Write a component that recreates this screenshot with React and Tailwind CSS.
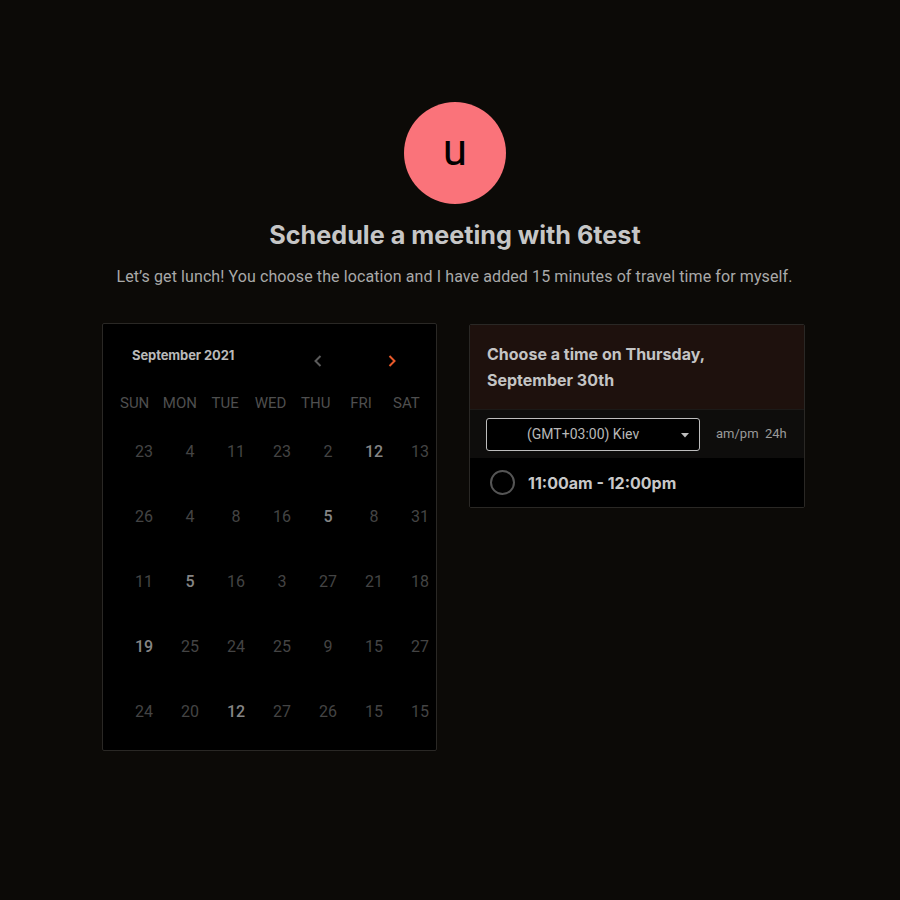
import React from "react";

const weekdays = ["SUN", "MON", "TUE", "WED", "THU", "FRI", "SAT"];
const rows = [
  [["23"], ["4"], ["11"], ["23"], ["2"], ["12", 1], ["13"]],
  [["26"], ["4"], ["8"], ["16"], ["5", 1], ["8"], ["31"]],
  [["11"], ["5", 1], ["16"], ["3"], ["27"], ["21"], ["18"]],
  [["19", 1], ["25"], ["24"], ["25"], ["9"], ["15"], ["27"]],
  [["24"], ["20"], ["12", 1], ["27"], ["26"], ["15"], ["15"]],
];

function Calendar() {
  return (
    <div className="w-[335px] h-[428px] bg-black border border-[#2a2825] rounded-[2px] shrink-0 relative">
      <div className="flex items-center h-[20px] mt-[22px] pl-[29px]">
        <span className="text-[13px] font-bold text-[#b9b9b9] font-['Inter',sans-serif] tracking-[-0.1px]">
          September 2021
        </span>
        <div className="ml-[78px] text-[#5b5b5b] mt-[10px]">
          <svg width="12" height="14" viewBox="0 0 12 14" fill="none">
            <path d="M8.5 2 L3.5 7 L8.5 12" stroke="currentColor" strokeWidth="2" />
          </svg>
        </div>
        <div className="ml-[62px] text-[#e8592a] mt-[10px]">
          <svg width="12" height="14" viewBox="0 0 12 14" fill="none">
            <path d="M3.5 2 L8.5 7 L3.5 12" stroke="currentColor" strokeWidth="2" />
          </svg>
        </div>
      </div>
      <div className="grid grid-cols-7 w-[317px] ml-[9px] mt-[27px]">
        {weekdays.map((d) => (
          <div
            key={d}
            className="text-center text-[15px] text-[#4f4f4f] font-['Roboto',sans-serif] leading-[20px]"
          >
            {d}
          </div>
        ))}
      </div>
      <div className="ml-[18px] w-[322px] mt-[24px]">
        {rows.map((r, i) => (
          <div key={i} className="grid grid-cols-7 h-[65px]">
            {r.map(([n, b], j) => (
              <div
                key={j}
                className={`flex items-start justify-center pt-[2px] text-[16px] leading-[26px] font-['Roboto',sans-serif] ${
                  b ? "text-[#858585] font-medium" : "text-[#444444]"
                }`}
              >
                {n}
              </div>
            ))}
          </div>
        ))}
      </div>
    </div>
  );
}

function TimePanel() {
  return (
    <div className="w-[336px] border border-[#2a2825] rounded-[2px] overflow-hidden shrink-0 mt-[1px] bg-black">
      <div className="bg-[#1e110d] h-[84px] pl-[17px] pt-[16px]">
        <div className="text-[16px] font-bold leading-[26px] text-[#c4c4c4] font-['Inter',sans-serif]">
          Choose a time on Thursday,
          <br />
          September 30th
        </div>
      </div>
      <div className="bg-[#0e0d0c] h-[49px] flex items-center pl-[16px] border-t border-[#1c1a18]">
        <div className="w-[214px] h-[33px] border border-[#bdbdbd] rounded-[3px] bg-black flex items-center relative">
          <span className="ml-[40px] text-[14px] text-[#b8b8b8] font-['Roboto',sans-serif]">
            (GMT+03:00) Kiev
          </span>
          <svg className="absolute right-[10px] top-[14px]" width="8" height="5" viewBox="0 0 8 5">
            <path d="M0 0 L8 0 L4 4.5 Z" fill="#bdbdbd" />
          </svg>
        </div>
        <span className="ml-[16px] text-[13px] text-[#9a9a9a] font-['Roboto',sans-serif]">
          am/pm&nbsp;&nbsp;24h
        </span>
      </div>
      <div className="bg-black h-[49px] flex items-center pl-[20px]">
        <div className="w-[25px] h-[25px] rounded-full border-2 border-[#555]" />
        <span className="ml-[13px] text-[16px] font-bold text-[#c8c8c8] font-['Inter',sans-serif]">
          11:00am - 12:00pm
        </span>
      </div>
    </div>
  );
}

export default function App() {
  return (
    <div className="min-h-[900px] w-full bg-[#0c0a07] flex flex-col items-center pt-[102px]">
      <div className="w-[102px] h-[102px] rounded-full bg-[#fa737a] flex items-center justify-center ml-[10px]">
        <span className="text-[44px] leading-none text-black font-['Roboto',sans-serif] -mt-[6px]">
          u
        </span>
      </div>
      <h1 className="mt-[14px] text-[25.2px] font-bold text-[#c6c6c6] font-['Inter',sans-serif] leading-[34px] ml-[10px]">
        Schedule a meeting with 6test
      </h1>
      <p className="mt-[13px] text-[16px] text-[#a9a9a9] font-['Roboto',sans-serif] leading-[24px] ml-[9px] tracking-[0.1px]">
        Let’s get lunch! You choose the location and I have added 15 minutes of travel time for myself.
      </p>
      <div className="flex items-start gap-[32px] mt-[34px] ml-[7px]">
        <Calendar />
        <TimePanel />
      </div>
    </div>
  );
}
